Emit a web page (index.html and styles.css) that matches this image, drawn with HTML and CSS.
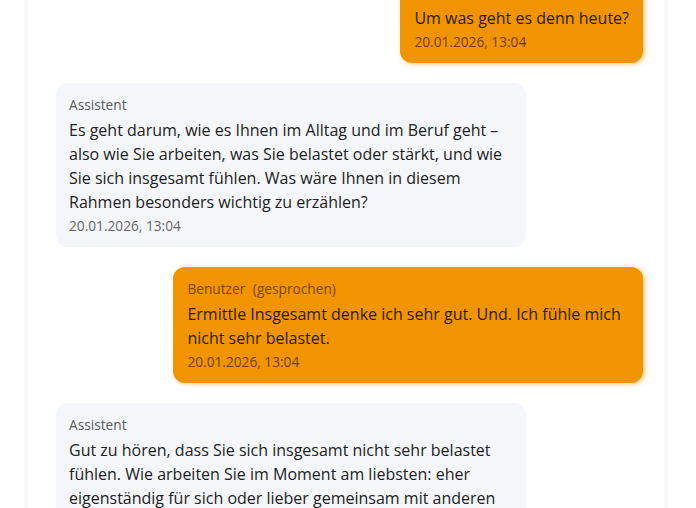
FILE: index.html
```html
<!DOCTYPE html>
<html lang="de">
<head>
<meta charset="utf-8">
<link rel="stylesheet" href="styles.css">
</head>
<body>
<div class="chat">
  <div class="msg user">
    <div class="label">Benutzer</div>
    <div class="text">Um was geht es denn heute?</div>
    <div class="time">20.01.2026, 13:04</div>
  </div>
  <div class="msg bot">
    <div class="label">Assistent</div>
    <div class="text">Es geht darum, wie es Ihnen im Alltag und im Beruf geht – also wie Sie arbeiten, was Sie belastet oder stärkt, und wie Sie sich insgesamt fühlen. Was wäre Ihnen in diesem Rahmen besonders wichtig zu erzählen?</div>
    <div class="time">20.01.2026, 13:04</div>
  </div>
  <div class="msg user">
    <div class="label">Benutzer <span class="spoken">(gesprochen)</span></div>
    <div class="text">Ermittle Insgesamt denke ich sehr gut. Und. Ich fühle mich nicht sehr belastet.</div>
    <div class="time">20.01.2026, 13:04</div>
  </div>
  <div class="msg bot">
    <div class="label">Assistent</div>
    <div class="text">Gut zu hören, dass Sie sich insgesamt nicht sehr belastet fühlen. Wie arbeiten Sie im Moment am liebsten: eher eigenständig für sich oder lieber gemeinsam mit anderen im Team?</div>
    <div class="time">20.01.2026, 13:04</div>
  </div>
</div>
</body>
</html>
```
FILE: styles.css
```css
html, body {
  margin: 0;
  padding: 0;
  background: #ffffff;
  overflow: hidden;
  height: 508px;
}
body {
  font-family: "Open Sans", "Liberation Sans", sans-serif;
  color: #222222;
}
.chat {
  margin: -29px 0 0 24px;
  width: 644px;
  box-sizing: border-box;
  border-left: 4px solid #f9f9f9;
  border-right: 4px solid #f9f9f9;
  padding: 0 21px 0 28px;
  display: flex;
  flex-direction: column;
  gap: 20px;
  min-height: 600px;
}
.msg {
  max-width: 80%;
  box-sizing: border-box;
  padding: 12px 14px 11px 13px;
  border-radius: 12px;
}
.user {
  align-self: flex-end;
  background: #f29400;
  color: #2b1c05;
  padding-left: 14px;
  box-shadow: 2px 1px 5px rgba(235, 145, 0, 0.5);
}
.bot {
  align-self: flex-start;
  background: #f4f6f9;
}
.label {
  font-size: 13.7px;
  line-height: 20px;
  margin-bottom: 3px;
  color: #5a5a5a;
}
.user .label {
  color: #7a4600;
}
.spoken {
  margin-left: 4px;
}
.text {
  font-size: 16px;
  line-height: 24px;
}
.time {
  font-size: 13.7px;
  line-height: 20px;
  margin-top: 2px;
  color: #666666;
}
.user .time {
  color: #6e4000;
}
```
